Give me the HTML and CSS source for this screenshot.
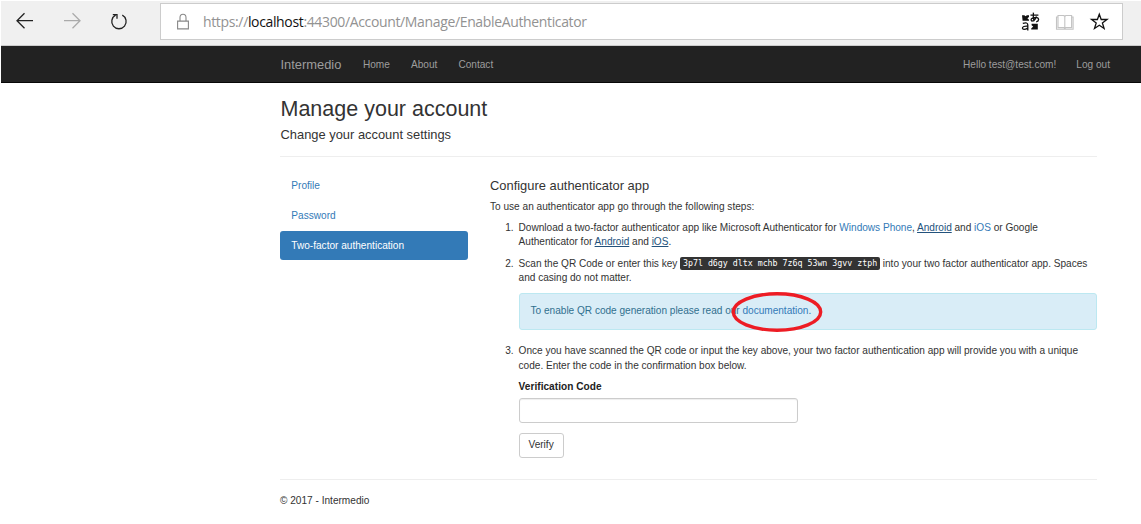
FILE: index.html
```html
<!DOCTYPE html>
<html lang="en">
<head>
<meta charset="utf-8">
<title>Manage your account - Intermedio</title>
<link rel="stylesheet" href="styles.css">
</head>
<body>
<header class="browser-bar">
  <svg class="nav-icons" width="160" height="40" viewBox="0 0 160 40" fill="none">
    <path d="M17 19.7H33M24.5 12.2L17 19.7L24.5 27.2" stroke="#222" stroke-width="1.3"/>
    <path d="M64 19.7H80M72.5 12.2L80 19.7L72.5 27.2" stroke="#aaa" stroke-width="1.3"/>
    <path d="M122.3 14.2A7.2 7.2 0 1 1 115.6 14.2M112.8 13.6H117V17.8" stroke="#222" stroke-width="1.3"/>
  </svg>
  <div class="address">
    <svg class="lock" width="14" height="18" viewBox="0 0 14 18" fill="none" stroke="#888" stroke-width="1.1">
      <path d="M1.6 8.1H12.4V15.9H1.6ZM4 8V4.7A3 3.4 0 0 1 10 4.7V8"/>
    </svg>
    <span class="url">https://<b>localhost</b>:44300/Account/Manage/EnableAuthenticator</span>
    <svg class="tools" width="90" height="22" viewBox="0 0 90 22" fill="none">
      <g stroke="#111" stroke-width="1.3">
        <path d="M10.5 4.2H18.4M13.4 1.6Q12.8 7 14.2 10.2M16.4 5.4Q15 10.2 11.8 10Q9.8 8.2 13.2 6.8Q18.2 5.8 18.6 8.4Q18.6 10.2 16.2 10.8"/>
        <path d="M2.8 12.4Q7.8 10.8 7.8 14V19.4M7.8 15.2Q2.4 14.8 2.4 17.2Q3 19.8 7.8 17"/>
      </g>
      <path d="M2 4.2H4.4L5.4 5.2L7 4.2H9V6L7.4 7.2L9 8.8V9.8H2.6ZM17.8 12.8V18.6H11.2V17.4L13.2 15.6L11.6 14.2V12.8Z" fill="#111"/>
      <path d="M38 4.5H43.8L44.8 5.5L45.8 4.5H51.6V16.6H45.8L44.8 17.6L43.8 16.6H38ZM44.8 5.5V17M38 6H36.5V18.2H53.1V6H51.6" stroke="#c3c3c3" stroke-width="1.1"/>
      <path d="M79.3 3.2L81.2 8.5H87L82.4 11.9L84.1 17.5L79.3 14.2L74.5 17.5L76.2 11.9L71.6 8.5H77.4Z" stroke="#111" stroke-width="1.3"/>
    </svg>
  </div>
</header>
<nav class="navbar">
  <a class="brand">Intermedio</a>
  <a class="nav-home">Home</a>
  <a class="nav-about">About</a>
  <a class="nav-contact">Contact</a>
  <a class="user">Hello test@test.com!</a>
  <a class="logout">Log out</a>
</nav>
<main class="container">
  <h2>Manage your account</h2>
  <h4>Change your account settings</h4>
  <hr>
  <div class="row">
    <ul class="pills">
      <li>Profile</li>
      <li>Password</li>
      <li class="active">Two-factor authentication</li>
    </ul>
    <section class="content">
      <h4 class="section-title">Configure authenticator app</h4>
      <p class="intro">To use an authenticator app go through the following steps:</p>
      <ol class="steps">
        <li>
          <p>Download a two-factor authenticator app like Microsoft Authenticator for <a>Windows Phone</a>, <a class="visited">Android</a> and <a>iOS</a> or Google<br>Authenticator for <a class="visited">Android</a> and <a class="visited">iOS</a>.</p>
        </li>
        <li>
          <p>Scan the QR Code or enter this key <kbd>3p7l d6gy dltx mchb 7z6q 53wn 3gvv ztph</kbd> into your two factor authenticator app. Spaces<br>and casing do not matter.</p>
          <div class="alert">To enable QR code generation please read our <span class="marked"><a>documentation</a>.<svg class="ring" width="92" height="42" viewBox="0 0 92 42"><ellipse cx="46" cy="21" rx="43.7" ry="18.2" fill="none" stroke="#ed1c24" stroke-width="3.4"/></svg></span></div>
        </li>
        <li>
          <p>Once you have scanned the QR code or input the key above, your two factor authentication app will provide you with a unique<br>code. Enter the code in the confirmation box below.</p>
          <form class="verify">
            <label for="code">Verification Code</label>
            <input id="code" type="text">
            <button type="button">Verify</button>
          </form>
        </li>
      </ol>
    </section>
  </div>
  <hr class="footer-rule">
  <footer>© 2017 - Intermedio</footer>
</main>
</body>
</html>
```
FILE: styles.css
```css
* { box-sizing: border-box; }
body {
  margin: 0;
  height: 524px;
  overflow: hidden;
  background: #fff;
  color: #333;
  font: 10.1px/14.35px "Liberation Sans", Arial, sans-serif;
}
h2, h4, p, ul, ol { margin: 0; padding: 0; font-weight: 400; }
a { color: #337ab7; }

.browser-bar {
  display: flex;
  height: 45px;
  margin: 1px 0 0 1px;
  background: #f0f0f0;
  border-bottom: 1px solid #ccc;
}
.nav-icons { flex: none; margin-left: -1px; }
.address {
  display: flex;
  align-items: center;
  width: 963px;
  height: 37px;
  margin-top: 2px;
  padding: 0 12px 0 15px;
  background: #fff;
  border: 1px solid #ccc;
}
.url {
  flex: 1;
  margin-left: 13px;
  color: #929292;
  font: 14px/20px "Open Sans", "Noto Sans", sans-serif;
  letter-spacing: -0.355px;
  white-space: nowrap;
}
.url b { color: #111; font-weight: 400; }
.tools { flex: none; }

.navbar {
  display: flex;
  align-items: center;
  height: 37px;
  margin-left: 1px;
  padding: 2px 31px 0 279.5px;
  background: #222;
  border-bottom: 1px solid #080808;
}
.navbar a { color: #9d9d9d; }
.navbar .brand { font-size: 12.9px; margin-right: 21.5px; }
.nav-home, .nav-about { margin-right: 21.1px; }
.user { margin-left: auto; margin-right: 20px; }

.container { width: 817px; margin-left: 280px; }
h2 { padding: 14px 0 0 0.5px; font-size: 21.5px; line-height: 24px; }
h4 { font-size: 12.9px; line-height: 14px; }
h2 + h4 { margin-top: 7px; padding-left: 0.5px; }
hr { height: 1px; margin: 14px 0; border: 0; background: #eee; }

.row { display: flex; }
.pills { width: 188px; margin-right: 22px; list-style: none; }
.pills li { height: 28.7px; margin-bottom: 1.4px; padding: 8px 11.3px 0; color: #337ab7; border-radius: 3px; }
.pills .active { background: #337ab7; color: #fff; }

.content { width: 607px; height: 308px; white-space: nowrap; }
.section-title { margin-top: 7.6px; }
.intro { margin-top: 7.3px; }
.steps { margin-top: 6.7px; padding-left: 28.6px; letter-spacing: -0.018px; }
.steps li::marker { content: counter(list-item) ".\2002"; }
.steps p { margin-bottom: 7.2px; }
.visited { color: #23527c; text-decoration: underline; }
kbd {
  padding: 1.4px 2.9px;
  border-radius: 2px;
  background: #333;
  color: #fff;
  font: 8.3px/11px "DejaVu Sans Mono", monospace;
}
.alert {
  height: 37.5px;
  margin-bottom: 14.3px;
  padding: 10.5px 11px;
  background: #d9edf7;
  border: 1px solid #bce8f1;
  border-radius: 3px;
  color: #31708f;
}
.marked { position: relative; }
.ring { position: absolute; left: -11px; top: -14.5px; }
.verify { display: flex; flex-direction: column; align-items: flex-start; }
label { font-weight: 700; color: #222; letter-spacing: 0.03px; }
input {
  width: 279px;
  height: 25px;
  margin: 3.3px 0 10px;
  border: 1px solid #ccc;
  border-radius: 3px;
  box-shadow: inset 0 1px 1px rgba(0, 0, 0, .07);
}
button {
  width: 45px;
  height: 25px;
  padding: 0;
  border: 1px solid #ccc;
  border-radius: 3px;
  background: #fff;
  color: #333;
  font: inherit;
}
.footer-rule { margin: 0 0 14px; }
```
